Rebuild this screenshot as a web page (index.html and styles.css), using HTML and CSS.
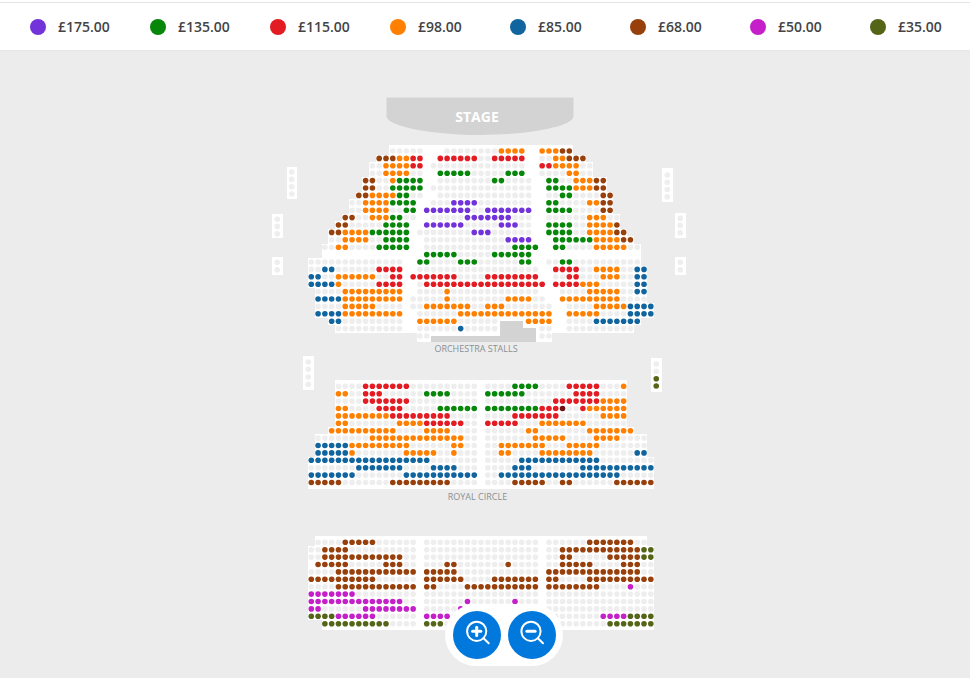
FILE: index.html
```html
<!DOCTYPE html>
<html lang="en">
<head>
    <meta charset="UTF-8">
    <meta name="viewport" content="width=device-width, initial-scale=1.0">
    <title>Seat Map</title>
    <link rel="stylesheet" href="styles.css">
</head>
<body>
    <div class="top-strip"></div>

    <!-- Price legend -->
    <div class="legend">
        <div class="legend-item"><span class="dot price-a"></span>£175.00</div>
        <div class="legend-item"><span class="dot price-g"></span>£135.00</div>
        <div class="legend-item"><span class="dot price-r"></span>£115.00</div>
        <div class="legend-item"><span class="dot price-o"></span>£98.00</div>
        <div class="legend-item"><span class="dot price-b"></span>£85.00</div>
        <div class="legend-item"><span class="dot price-n"></span>£68.00</div>
        <div class="legend-item"><span class="dot price-m"></span>£50.00</div>
        <div class="legend-item"><span class="dot price-l"></span>£35.00</div>
    </div>

    <!-- Seat map, seats are added by map.js -->
    <svg id="seat-map" class="seat-map" width="970" height="678" viewBox="0 0 970 678">
        <path class="stage" d="M386.5 97.5 H573.5 V116 C573.5 127 525 135 480 135 C435 135 386.5 127 386.5 116 Z"/>
        <text class="stage-label" x="477" y="122">STAGE</text>
        <text class="section-label" x="476" y="351.5">ORCHESTRA STALLS</text>
        <text class="section-label" x="477.5" y="499.5">ROYAL CIRCLE</text>
    </svg>

    <!-- Zoom controls -->
    <div class="zoom-controls">
        <button class="zoom-btn" aria-label="Zoom in">
            <svg width="48" height="48" viewBox="0 0 48 48">
                <circle class="icon-line" cx="23.7" cy="20.3" r="9.6"/>
                <line class="icon-line" x1="30.6" y1="27.2" x2="35.7" y2="32.3"/>
                <line class="icon-bar" x1="19.6" y1="20.3" x2="27.8" y2="20.3"/>
                <line class="icon-bar" x1="23.7" y1="16.2" x2="23.7" y2="24.4"/>
            </svg>
        </button>
        <button class="zoom-btn" aria-label="Zoom out">
            <svg width="48" height="48" viewBox="0 0 48 48">
                <circle class="icon-line" cx="23" cy="20.3" r="9.6"/>
                <line class="icon-line" x1="29.9" y1="27.2" x2="35" y2="32.3"/>
                <line class="icon-bar" x1="18.9" y1="20.3" x2="27.1" y2="20.3"/>
            </svg>
        </button>
    </div>

    <script src="map.js"></script>
</body>
</html>
```

FILE: styles.css
```css
body {
    margin: 0;
    width: 970px;
    height: 678px;
    overflow: hidden;
    position: relative;
    background-color: #ececec;
    font-family: "Open Sans", sans-serif;
}
.top-strip {
    height: 2px;
    background-color: #fff;
    border-bottom: 1px solid #e4e4e4;
}
.legend {
    display: flex;
    align-items: center;
    height: 47px;
    padding-left: 30px;
    background-color: #fff;
    border-bottom: 1px solid #e6e6e6;
}
.legend-item {
    display: flex;
    flex: 0 0 120px;
    align-items: center;
    font-size: 14px;
    font-weight: 600;
    color: #444;
}
.dot {
    width: 16px;
    height: 16px;
    margin-right: 12px;
    border-radius: 50%;
}
.price-a { background-color: #7234da; }
.price-g { background-color: #06870a; }
.price-r { background-color: #e31b23; }
.price-o { background-color: #ff8000; }
.price-b { background-color: #10659f; }
.price-n { background-color: #97400c; }
.price-m { background-color: #c41fc9; }
.price-l { background-color: #556518; }

.seat-map {
    position: absolute;
    top: 0;
    left: 0;
}
.stage {
    fill: #d3d3d3;
}
.stage-label {
    fill: #fff;
    font-size: 14px;
    font-weight: 700;
    text-anchor: middle;
}
.section-label {
    fill: #8a8f94;
    font-size: 9px;
    text-anchor: middle;
}
.block {
    fill: #fff;
    shape-rendering: crispEdges;
}
.ramp {
    fill: #d3d3d3;
    shape-rendering: crispEdges;
}
.seat-e { fill: #eee; }
.seat-a { fill: #7234da; }
.seat-g { fill: #06870a; }
.seat-r { fill: #e31b23; }
.seat-o { fill: #ff8000; }
.seat-b { fill: #10659f; }
.seat-n { fill: #97400c; }
.seat-m { fill: #c41fc9; }
.seat-l { fill: #556518; }
.seat-d { fill: #6e0f12; }

.zoom-controls {
    position: absolute;
    top: 604px;
    left: 445px;
    display: flex;
    gap: 7px;
    padding: 7px 7px 7px 8px;
    background-color: #fff;
    border-radius: 31px;
}
.zoom-btn {
    width: 48px;
    height: 48px;
    padding: 0;
    border: none;
    border-radius: 50%;
    background-color: #0078dc;
}
.zoom-btn svg {
    display: block;
}
.icon-line {
    fill: none;
    stroke: #fff;
    stroke-width: 2;
    stroke-linecap: round;
}
.icon-bar {
    stroke: #fff;
    stroke-width: 3;
    stroke-linecap: round;
}
```

FILE: map.js
```js
const COL_X = 311.3;
const COL_W = 6.79;
const ROW_H = 7.4;
const NS = 'http://www.w3.org/2000/svg';

// letter = price (e is an unpriced seat, w is white backing with no seat), then columns
const stalls = [
    'e12-16 e20-27 o28-31 o34-36 n37-38',
    'n10-12 o13-14 r15-16 r19-24 e25-26 r27-31 e34-35 o36-37 n38-40',
    'e9-10 o11-14 r15-16 e18-31 r34-35 o36-39 e40-41',
    'e9-10 o11-14 e15-16 g19-23 e24-28 g29-31 e34-37 o38-39 e40-41',
    'n8-9 e10-11 o12 g13-16 e19-26 g27-28 e29-32 g35-36 e37-38 o39-41 n42-43',
    'n8-9 e10-11 g12-16 e18-32 g35-38 o39-41 n42-43',
    'n7-8 o9-12 g13-14 e15-16 e19-32 e35-36 g37-38 e39-42 n43-44',
    'e6-7 o8-11 g12-15 e18-20 a21-24 e25-32 g35-36 e37-40 o41-42 n43-44',
    'e6-7 o8-11 e12-13 g14-15 a17-23 e24-25 a26-32 g35-38 e39-42 n43-44',
    'n5-6 e7-8 o9-11 g12-13 e14-15 e18-22 a23-29 e30-32 e35-40 o41-43 e44-45',
    'n4-5 e6-10 g11-14 a17-22 e23-27 a28-30 e31-32 g35-38 e39-40 o41-44 n45',
    'n3-4 o5-8 g9-14 e16-23 a24-26 e27-32 g35-38 e39-40 o41-44 n45-46',
    'e3-4 o5-8 e9-10 g11-14 e17-28 a29-32 g36-41 o42-45 n46-47',
    'e2-3 o4-5 e6-9 g10-14 e17-29 g30-33 g36-37 e38-41 o42-46 e47-48',
    'w2-48 g17-21 e22-26 g27-32',
    'e0-13 g16-17 e18-21 g22-24 e25-30 g31-32 e35-36 g37-38 e39-48',
    'e0-1 b2-3 e4-9 r10-13 e16-33 r36-39 e40-41 o42-45 e46-47 b48-49',
    'b0-1 e2-3 o4-9 e10-11 r12-13 r15-21 e22-25 r26-33 e36-37 r38-39 e40-42 o43-45 e46-47 b48-49',
    'b0-3 o4 e5-9 r10-13 e16 r17-34 r36-39 o40-42 e43-47 b48-49',
    'e1-4 o5-13 e16-19 o20 e21-33 e37-40 o41-45 e46-47 b48-49',
    'b1-4 o5-13 e15-19 o20 e21-28 o29-32 e33-34 o37-45 e46-49',
    'e1-4 o5-9 e10-13 e15-16 o17-23 e24-25 o26-28 e29-35 e38-41 o42-46 b47-50',
    'b1-4 o5-13 e16-21 o22-35 o38-42 e43-46 b47-50',
    'b3-4 e5-13 o16-21 e22-27 o32-35 e38-41 b42-48',
    'e4-13 e16-21 b22 e23-27 e34-35 e38-47',
    'e16-17 e34-35'
];

const royal = [
    'e4-7 r8-14 e15-24 e26-29 g30-33 e34-37 r38-42 e43-45 o46',
    'o4-5 e6-7 r8-10 e11-16 g17-20 e21-24 g26-31 e32-38 r39-42 e43-46',
    'e4-7 r8-14 e15-24 e26-35 r36-42 o43-46',
    'o4-5 e6-9 r10-13 e14-18 g19-24 g26-33 r34-36 d37 e38-39 r40 o41-46',
    'o4-11 r12-20 e21-24 e26-29 r30-36 e37-42 o43-46',
    'o4-5 e6-12 o13-16 r17-22 e23-24 r26-30 e31-33 o34-40 e41-46',
    'o3-12 e13-16 o17-20 e21-24 e26-31 o32-33 e34-40 o41-47',
    'e1-8 o9-22 e23-24 e26-32 o33-37 e38-41 o42-45 e46-49',
    'b1-5 o6-14 e15-20 o21-22 e23-24 e26-27 o28-34 e35-37 o38-42 e43-49',
    'b1-5 o6 e7-13 o14-18 e19-20 o21 e22-24 e26-27 o28-29 e30-33 o34-41 e42-47 b48-49',
    'b0-17 e18-24 e26-30 b31-42 e43-50',
    'e0-6 b7-13 e14-17 b18-21 e22-24 e26-29 b30-32 e33-39 b40-50',
    'b0-6 e7-13 b14-24 e26-27 b28-45 e46-50',
    'n0-4 e5-11 n12-20 e21-24 e26-29 n30-34 e35-36 n37-38 e39-44 n45-50'
];

const upper = [
    'e1-4 n5-9 e10-15 e17-33 e35-40 n41-47 e48-49',
    'e0-1 n2-5 e6-15 e17-33 e35-36 n37-48 l49-50',
    'e0-1 n2-13 e14-15 e17-33 e35-36 n37-38 e39-43 n44-48 l49-50',
    'w0 n1-5 e6-10 n11-13 e14-15 e17-19 n20-21 e22-28 n29 e30-33 e35-36 n37-41 e42-45 n46-48 e49-50',
    'e0-3 n4-15 n17-21 e22-33 n35-48 e49-50',
    'n0-9 e10-15 n17-22 e23-26 n27-33 n35-36 e37-40 n41-50',
    'e0-3 n4-15 n17-18 e19-22 n23-33 n35-42 e43-46 m47 e48-50',
    'm0-6 e7-15 e17-33 e35-50',
    'm0-13 e14-15 e17-22 m23 e24-29 m30 e31-33 e35-50',
    'm0-1 e2-7 m8-15 e17-21 m22 e23-33 e35-50',
    'l0-3 m4-9 e10-15 m17-20 e21-33 e35-42 m43-46 l47-50',
    'l2-11 e12-15 l17-19 e20-33 e35-43 l44-50'
];

// the little boxes at the sides: x, y, w, h, then seats as [cy, price]
const boxes = [
    [286.5, 167, 10.5, 32, [[172, 'e'], [179.3, 'e'], [186.7, 'e'], [194, 'e']]],
    [272, 214, 10.5, 24, [[219.3, 'e'], [226.4, 'e'], [233.7, 'e']]],
    [272, 257, 10.5, 18, [[262.3, 'e'], [269.7, 'e']]],
    [662, 168, 10.5, 34, [[175, 'e'], [182.3, 'e'], [189.5, 'e'], [196.7, 'e']]],
    [675, 213, 10.5, 25, [[218.3, 'e'], [225.4, 'e'], [232.7, 'e']]],
    [675, 257, 10.5, 18, [[262.3, 'e'], [269.7, 'e']]],
    [303, 356, 10.5, 34, [[362, 'e'], [369.3, 'e'], [377, 'e'], [384.3, 'e']]],
    [651, 358, 10.5, 34, [[364, 'e'], [371.3, 'e'], [378.7, 'l'], [386, 'l']]]
];

const svg = document.getElementById('seat-map');
const seatLayer = document.createElementNS(NS, 'g');
const blockLayer = document.createElementNS(NS, 'g');
svg.appendChild(blockLayer);
svg.appendChild(seatLayer);

function addRect(cls, x, y, w, h) {
    const rect = document.createElementNS(NS, 'rect');
    rect.setAttribute('class', cls);
    rect.setAttribute('x', x);
    rect.setAttribute('y', y);
    rect.setAttribute('width', w);
    rect.setAttribute('height', h);
    blockLayer.appendChild(rect);
}

function addSeat(price, cx, cy) {
    const seat = document.createElementNS(NS, 'circle');
    seat.setAttribute('class', 'seat-' + price);
    seat.setAttribute('cx', cx.toFixed(2));
    seat.setAttribute('cy', cy.toFixed(2));
    seat.setAttribute('r', 2.8);
    seatLayer.appendChild(seat);
}

function drawSection(rows, top) {
    rows.forEach((row, index) => {
        const y = top + index * ROW_H;
        let first = 99;
        let last = -1;

        row.split(' ').forEach(part => {
            const price = part[0];
            const [from, to] = part.slice(1).split('-').map(Number);
            const end = to === undefined ? from : to;
            first = Math.min(first, from);
            last = Math.max(last, end);
            if (price === 'w') return;
            for (let col = from; col <= end; col++) {
                addSeat(price, COL_X + col * COL_W, y);
            }
        });

        // white backing, a bit deeper on the first and last rows
        const extraTop = index === 0 ? 2.3 : 0;
        const extraBottom = index === rows.length - 1 ? 2.3 : 0;
        addRect('block', COL_X + first * COL_W - 3.3, y - 3.7 - extraTop,
            (last - first) * COL_W + 6.6, ROW_H + extraTop + extraBottom + 0.3);
    });
}

drawSection(stalls, 151);
drawSection(royal, 386.3);
drawSection(upper, 542.3);

boxes.forEach(box => {
    addRect('block', box[0], box[1], box[2], box[3]);
    box[4].forEach(seat => addSeat(seat[1], box[0] + box[2] / 2, seat[0]));
});

// stage ramp at the front of the stalls
addRect('ramp', 500, 321, 23, 8);
addRect('ramp', 500, 328, 36, 14);
addRect('ramp', 431, 336, 69, 6);
```
